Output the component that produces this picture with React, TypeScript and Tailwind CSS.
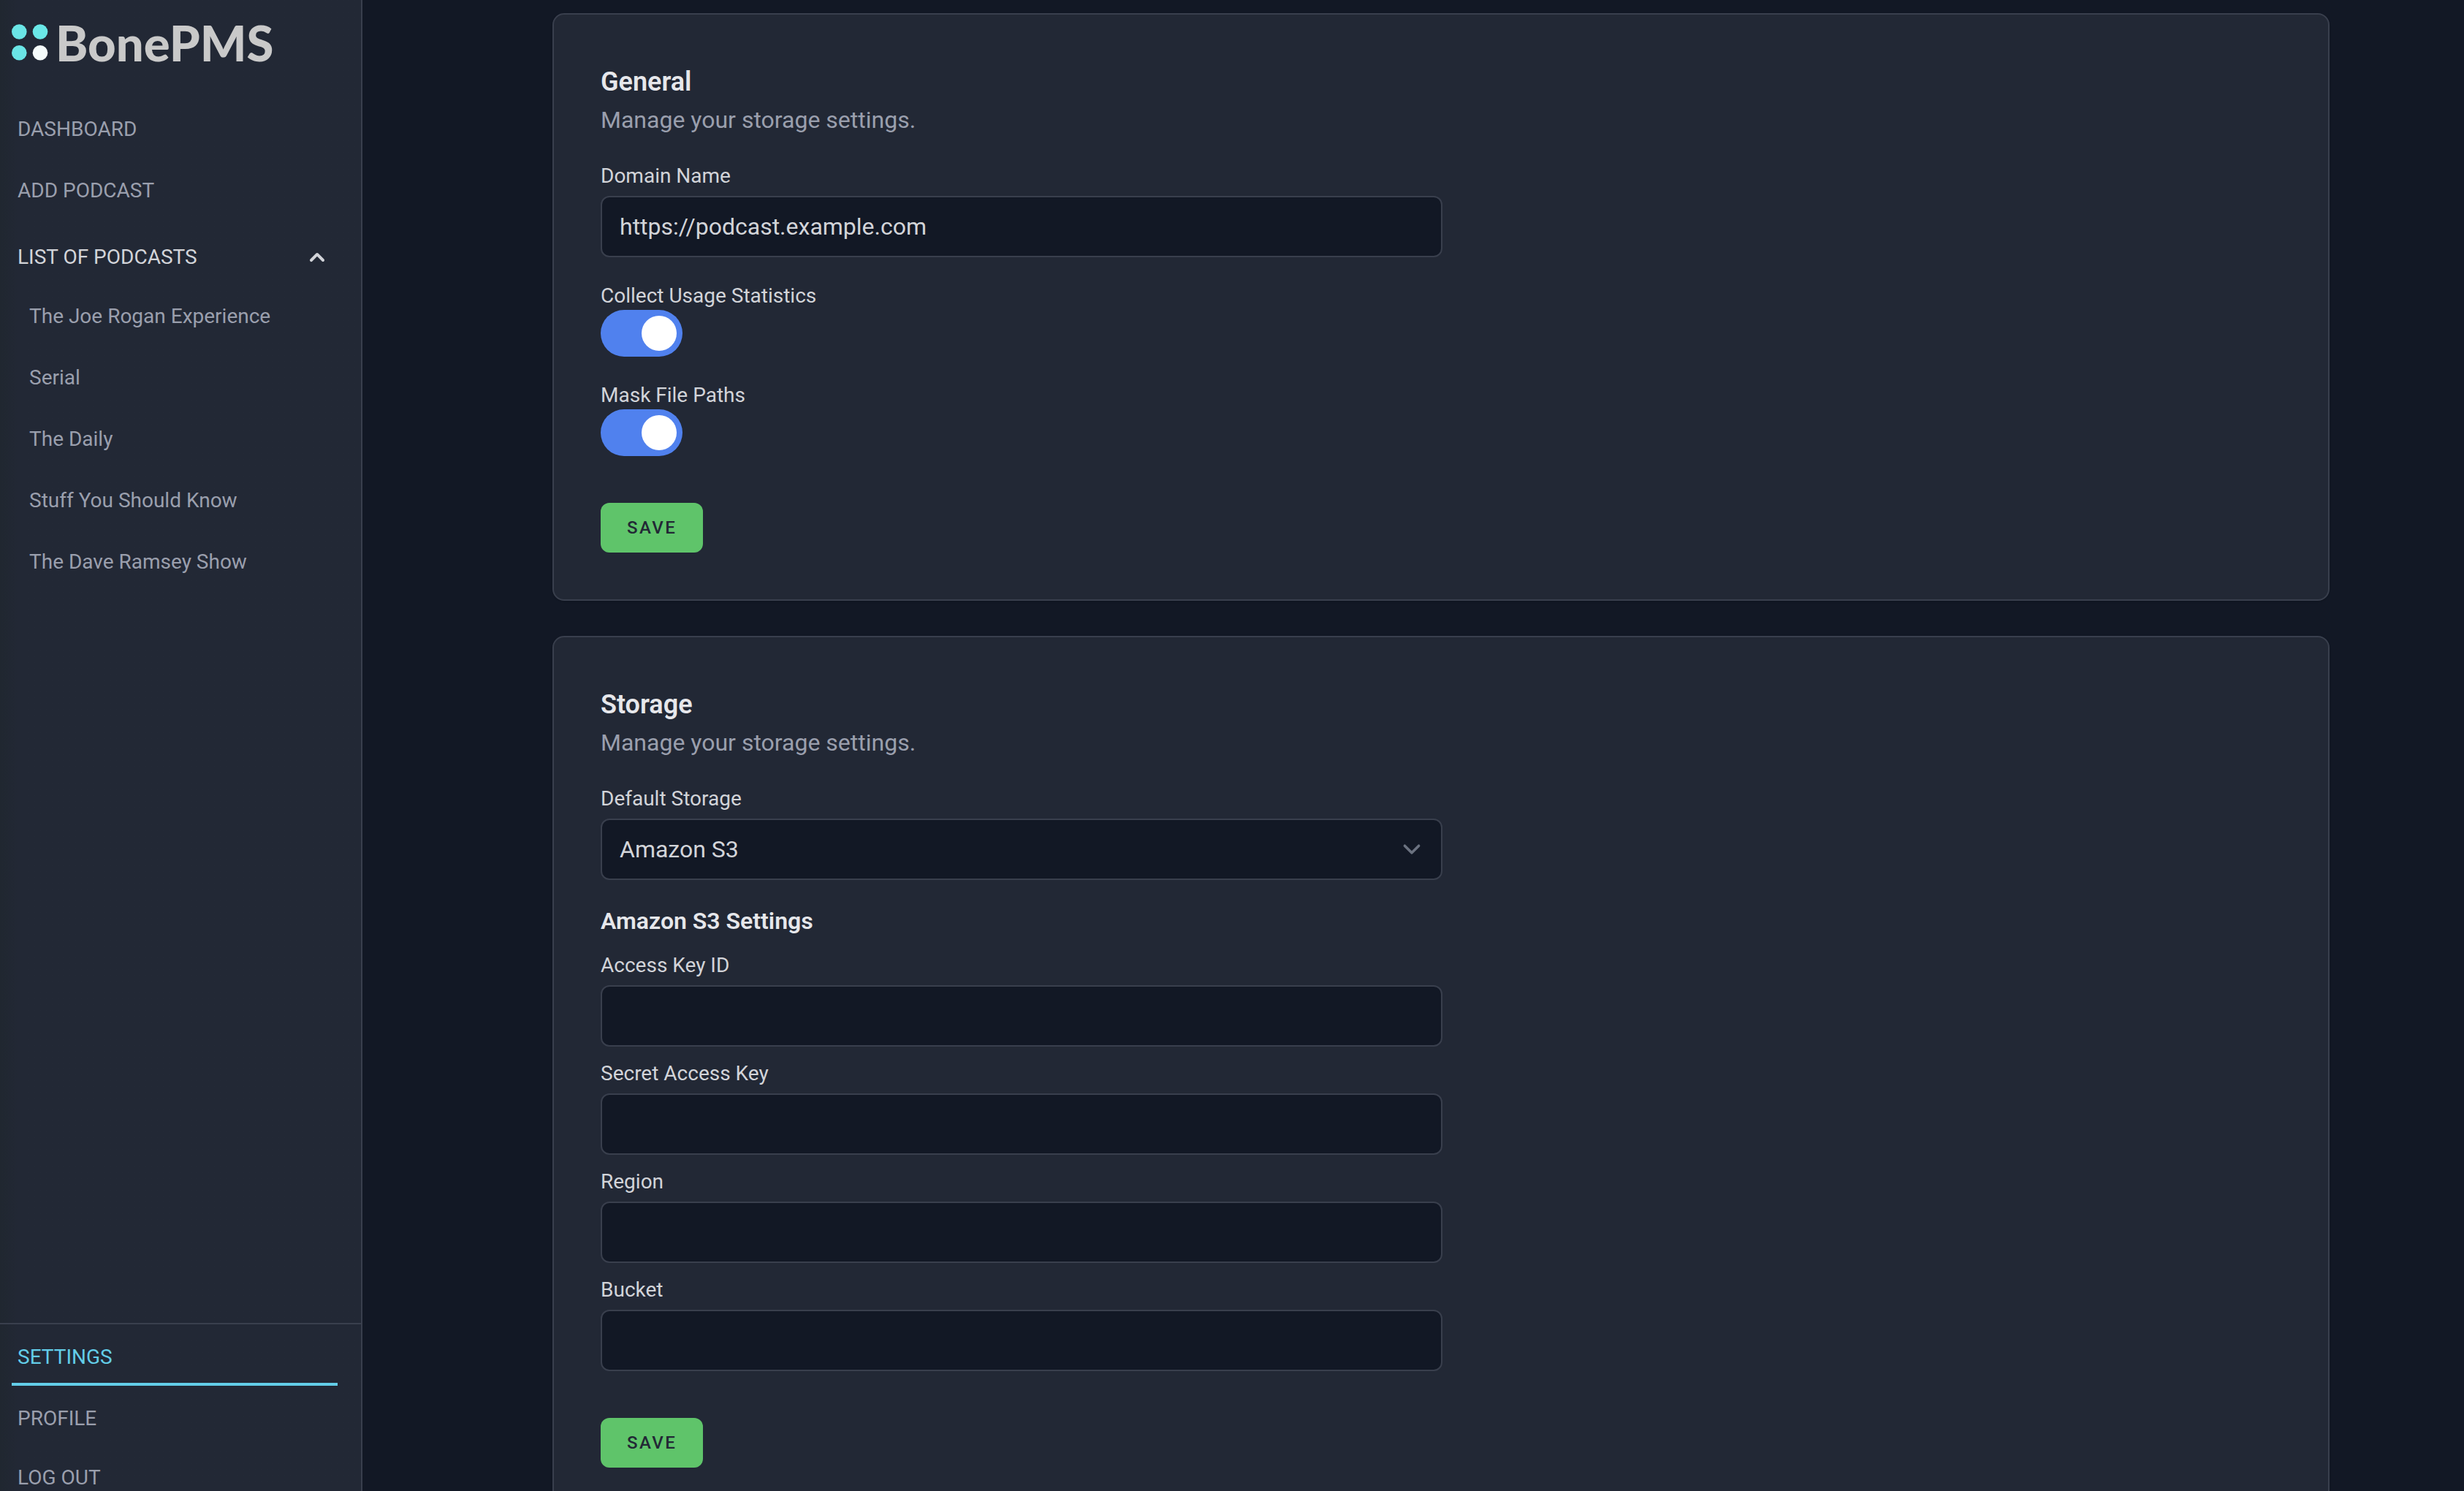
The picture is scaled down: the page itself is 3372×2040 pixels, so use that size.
import { useState } from "react";
import type { ReactNode } from "react";

const podcasts = [
  "The Joe Rogan Experience",
  "Serial",
  "The Daily",
  "Stuff You Should Know",
  "The Dave Ramsey Show",
];

const s3Fields = [
  { id: "access-key-id", label: "Access Key ID" },
  { id: "secret-access-key", label: "Secret Access Key" },
  { id: "region", label: "Region" },
  { id: "bucket", label: "Bucket" },
];

const fieldClass =
  "block h-[84px] w-full rounded-xl border-2 border-[#393f4d] bg-[#121825] px-6 text-[32px] leading-[48px] text-[#d2d4d9] outline-none focus:border-[#63cde8]";
const labelClass = "block h-10 text-[28px] leading-[42px] font-[450] text-[#d2d4d9]";

function Logo() {
  return (
    <a href="#home" className="flex h-20 items-center gap-2.5" aria-label="BonePMS">
      <svg className="size-[50px]" viewBox="0 0 50 50" aria-hidden="true">
        <circle cx="10.3" cy="10.5" r="10.3" fill="#6ae5e6" />
        <circle cx="39" cy="10.5" r="10.3" fill="#6ae8e8" />
        <circle cx="10.3" cy="39.2" r="10.3" fill="#6ae5e6" />
        <circle cx="39" cy="39.2" r="10.3" fill="#f5fbfb" />
      </svg>
      <span className="font-['Lato',sans-serif] text-[67px] leading-[80px] font-black text-[#c9c9c9]">
        BonePMS
      </span>
    </a>
  );
}

function NavLink({ children, active = false }: { children: ReactNode; active?: boolean }) {
  return (
    <a
      href="#nav"
      aria-current={active ? "page" : undefined}
      className={
        active
          ? "mb-1 block h-20 border-b-4 border-[#63cde8] px-2 pt-5 text-[#63cde8]"
          : "mb-1 block h-20 px-2 pt-5 text-[#9a9fad]"
      }
    >
      {children}
    </a>
  );
}

function Sidebar() {
  const [open, setOpen] = useState(true);
  return (
    <aside className="flex w-[496px] shrink-0 flex-col border-r-2 border-[#393f4d] bg-linear-to-r from-[#202730] to-[#222835] to-5% text-[28px] leading-[42px] font-[450]">
      <nav className="flex-1 overflow-hidden pr-8 pl-4 pt-[18px]">
        <Logo />
        <div className="mt-[38px] flex flex-col">
          <NavLink>DASHBOARD</NavLink>
          <NavLink>ADD PODCAST</NavLink>
          <button
            type="button"
            aria-expanded={open}
            onClick={() => setOpen(!open)}
            className="mt-2 flex h-20 items-center justify-between px-2 text-[#d2d4d9]"
          >
            LIST OF PODCASTS
            <svg
              className={open ? "size-10 rotate-180" : "size-10"}
              viewBox="0 0 20 20"
              fill="currentColor"
              aria-hidden="true"
            >
              <path
                fillRule="evenodd"
                clipRule="evenodd"
                d="M5.293 7.293a1 1 0 011.414 0L10 10.586l3.293-3.293a1 1 0 111.414 1.414l-4 4a1 1 0 01-1.414 0l-4-4a1 1 0 010-1.414z"
              />
            </svg>
          </button>
          {open && (
            <ul className="pl-4">
              {podcasts.map((title) => (
                <li key={title}>
                  <NavLink>{title}</NavLink>
                </li>
              ))}
            </ul>
          )}
        </div>
      </nav>
      <div className="h-[230px] shrink-0 overflow-hidden border-t-2 border-[#393f4d] pr-8 pl-4 pt-1">
        <NavLink active>SETTINGS</NavLink>
        <NavLink>PROFILE</NavLink>
        <button type="button" className="block h-[76px] w-full px-2 text-left text-[#9a9fad]">
          LOG OUT
        </button>
      </div>
    </aside>
  );
}

function Toggle({ id, label }: { id: string; label: string }) {
  return (
    <div>
      <label htmlFor={id} className={labelClass}>
        {label}
      </label>
      <input
        id={id}
        type="checkbox"
        role="switch"
        defaultChecked
        className="flex h-16 w-28 cursor-pointer appearance-none items-center rounded-full bg-[#393f4d] p-2 before:size-12 before:rounded-full before:bg-white checked:justify-end checked:bg-[#5081ee]"
      />
    </div>
  );
}

function TextField({ id, label, value }: { id: string; label: string; value?: string }) {
  return (
    <div className="flex flex-col gap-2">
      <label htmlFor={id} className={labelClass}>
        {label}
      </label>
      <input id={id} type="text" defaultValue={value} className={fieldClass} />
    </div>
  );
}

function Card({ title, children }: { title: string; children: ReactNode }) {
  return (
    <section className="rounded-2xl border-2 border-[#393f4d] bg-[#222835] p-16 shadow-sm">
      <form className="max-w-6xl" onSubmit={(e) => e.preventDefault()}>
        <h2 className="text-4xl leading-[56px] font-semibold text-[#e6e7eb]">{title}</h2>
        <p className="mb-8 text-[32px] leading-[48px] text-[#9a9fad]">Manage your storage settings.</p>
        {children}
        <button
          type="submit"
          className="mt-16 block h-[68px] rounded-xl bg-[#5fc46a] px-9 text-2xl font-medium tracking-widest text-[#222835]"
        >
          SAVE
        </button>
      </form>
    </section>
  );
}

export default function App() {
  return (
    <div className="flex h-screen overflow-hidden bg-[#121825] font-['Roboto',sans-serif]">
      <Sidebar />
      <main className="flex-1 overflow-hidden pt-[18px] pl-[76px]">
        <div className="mx-auto flex max-w-[2560px] flex-col gap-12 px-16">
          <Card title="General">
            <div className="flex flex-col gap-8">
              <TextField id="domain" label="Domain Name" value="https://podcast.example.com" />
              <Toggle id="usage-statistics" label="Collect Usage Statistics" />
              <Toggle id="mask-paths" label="Mask File Paths" />
            </div>
          </Card>
          <Card title="Storage">
            <div className="flex flex-col gap-2">
              <label htmlFor="storage" className={labelClass}>
                Default Storage
              </label>
              <div className="relative">
                <select id="storage" className={`${fieldClass} appearance-none`}>
                  <option>Amazon S3</option>
                  <option>Local</option>
                </select>
                <svg
                  className="pointer-events-none absolute inset-y-0 right-[18px] my-auto size-12"
                  viewBox="0 0 20 20"
                  fill="none"
                  stroke="#6b7280"
                  strokeWidth="1.5"
                  strokeLinecap="round"
                  strokeLinejoin="round"
                  aria-hidden="true"
                >
                  <path d="M6 8l4 4 4-4" />
                </svg>
              </div>
            </div>
            <h3 className="mt-8 mb-4 text-[32px] leading-[48px] font-semibold text-[#e6e7eb]">
              Amazon S3 Settings
            </h3>
            <div className="flex flex-col gap-4">
              {s3Fields.map((field) => (
                <TextField key={field.id} id={field.id} label={field.label} />
              ))}
            </div>
          </Card>
        </div>
      </main>
    </div>
  );
}
